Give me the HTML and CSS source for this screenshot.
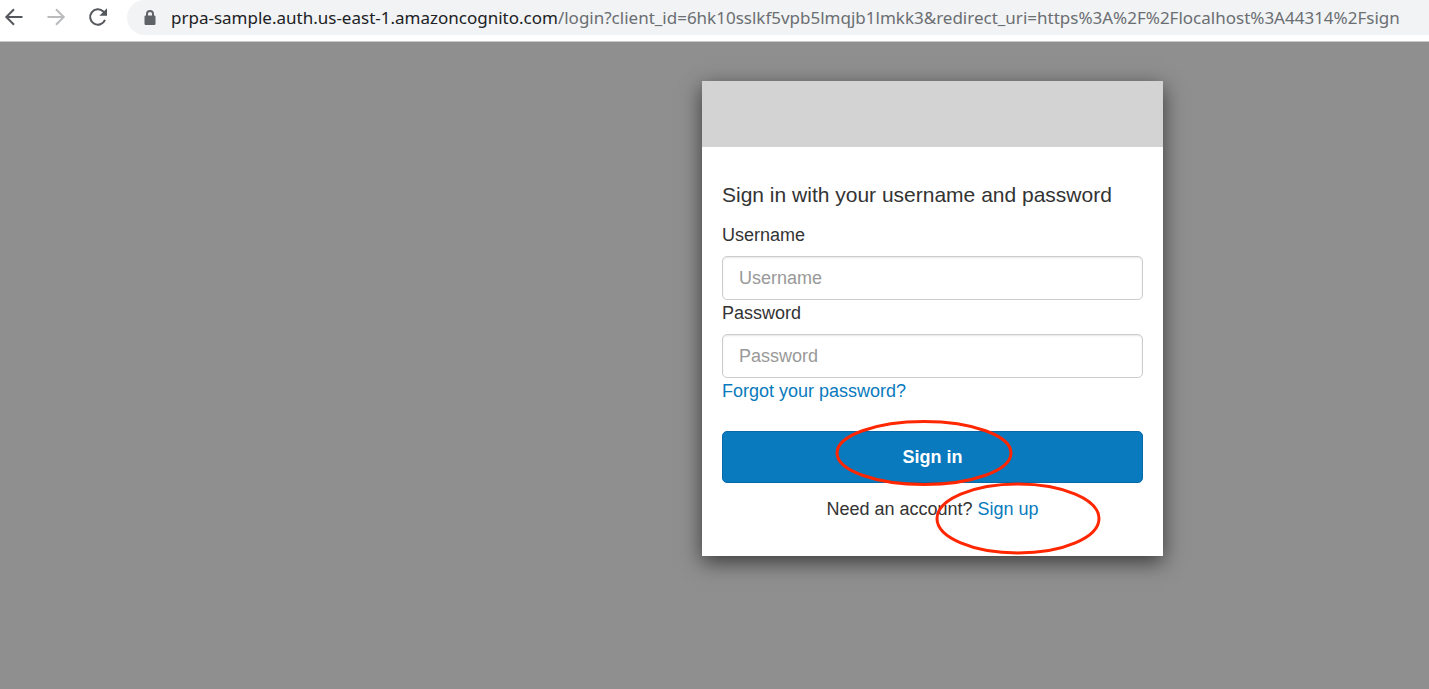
FILE: index.html
```html
<!DOCTYPE html>
<html lang="en">
<head>
<meta charset="utf-8">
<title>Sign in</title>
<link rel="stylesheet" href="styles.css">
</head>
<body>
<header class="toolbar">
  <nav class="nav-buttons" aria-label="Browser navigation">
    <button class="nav-button" type="button" aria-label="Back">
      <svg width="20" height="20" viewBox="0 0 20 20"><path d="M18.500 10H2.500M10 2.300L2.300 10L10 17.700"/></svg>
    </button>
    <button class="nav-button nav-button-disabled" type="button" aria-label="Forward" disabled>
      <svg width="20" height="20" viewBox="0 0 20 20"><path d="M1.500 10H17.500M10 2.300L17.700 10L10 17.700"/></svg>
    </button>
    <button class="nav-button" type="button" aria-label="Reload">
      <svg width="20" height="20" viewBox="0 0 20 20"><path d="M17 12.800A7.700 7.700 0 1 1 15.300 4.500L17 6.200"/><path class="solid" d="M19 1.200V8.800H11.400Z"/></svg>
    </button>
  </nav>
  <div class="address">
    <svg class="lock" width="12" height="16" viewBox="0 0 12 16" aria-hidden="true"><rect x="0.500" y="5.500" width="11" height="9.500" rx="1.300"/><path d="M3 6V4a3 3 0 0 1 6 0V6"/></svg>
    <div class="url"><span class="host">prpa-sample.auth.us-east-1.amazoncognito.com</span>/login?client_id=6hk10sslkf5vpb5lmqjb1lmkk3&amp;redirect_uri=https%3A%2F%2Flocalhost%3A44314%2Fsign</div>
  </div>
</header>
<main class="page">
  <section class="card">
    <div class="banner"></div>
    <form class="form">
      <h1 class="title">Sign in with your username and password</h1>
      <label class="label" for="username">Username</label>
      <input class="field" id="username" type="text" placeholder="Username">
      <label class="label" for="password">Password</label>
      <input class="field" id="password" type="password" placeholder="Password">
      <a class="link" href="#">Forgot your password?</a>
      <button class="submit" type="submit">Sign in</button>
      <p class="signup">Need an account? <a class="link" href="#">Sign up</a></p>
    </form>
    <svg class="marks" width="461" height="475" viewBox="0 0 461 475" aria-hidden="true">
      <ellipse cx="222" cy="372" rx="87" ry="31.500"/>
      <ellipse cx="316" cy="437.500" rx="81" ry="34.500"/>
    </svg>
  </section>
</main>
</body>
</html>
```
FILE: styles.css
```css
* {
  box-sizing: border-box;
}

body {
  margin: 0;
  min-height: 100vh;
  display: flex;
  flex-direction: column;
  overflow-x: hidden;
  background: #8f8f8f;
  color: #333;
  font: 18px/26px "Liberation Sans", Arial, sans-serif;
}

.toolbar {
  display: flex;
  height: 42px;
  padding-bottom: 6px;
  background: #fff;
  border-bottom: 1px solid #c8c9cb;
}

.nav-buttons {
  display: flex;
  align-items: center;
  gap: 22px;
  padding: 0 19px 2px 4px;
}

.nav-button {
  display: flex;
  padding: 0;
  border: 0;
  background: none;
  color: #54585d;
}

.nav-button-disabled {
  color: #b9bbbd;
}

.nav-button path {
  fill: none;
  stroke: currentColor;
  stroke-width: 2;
}

.nav-button .solid {
  fill: currentColor;
  stroke: none;
}

.address {
  flex: 1;
  min-width: 0;
  display: flex;
  align-items: center;
  gap: 15px;
  padding-left: 17px;
  overflow: hidden;
  background: #f1f3f4;
  border-radius: 18px 0 0 18px;
}

.lock {
  flex: none;
  fill: #5f6368;
}

.lock path {
  fill: none;
  stroke: #5f6368;
  stroke-width: 2;
}

.url {
  white-space: nowrap;
  color: #6b6e72;
  font-family: "Noto Sans", "Open Sans", sans-serif;
  font-size: 17px;
}

.host {
  color: #202124;
}

.page {
  flex: 1;
  display: grid;
  grid-template-columns: 702fr 461px 266fr;
  align-items: start;
  padding: 39px 0;
}

.card {
  grid-column: 2;
  position: relative;
  background: #fff;
  box-shadow: 0 6px 20px rgba(0, 0, 0, 0.6);
}

.banner {
  height: 66px;
  background: #d3d3d3;
}

.form {
  display: flex;
  flex-direction: column;
  align-items: stretch;
  padding: 32px 20px 34px;
}

.title {
  margin: 0 0 11px;
  font-size: 21px;
  font-weight: 400;
  line-height: 32px;
}

.label {
  margin-bottom: 8px;
}

.field {
  height: 44px;
  padding: 0 16px;
  border: 1px solid #ccc;
  border-radius: 5px;
  box-shadow: inset 0 1px 2px rgba(0, 0, 0, 0.1);
  color: #555;
  font: inherit;
}

.field::placeholder {
  color: #999;
  opacity: 1;
}

.link {
  color: #087abd;
  text-decoration: none;
}

.submit {
  height: 52px;
  margin: 27px 0 13px;
  border: 1px solid #0769a8;
  border-radius: 5px;
  background: #087abd;
  color: #fff;
  font: inherit;
  font-weight: 700;
}

.signup {
  margin: 0;
  text-align: center;
}

.marks {
  position: absolute;
  top: 0;
  left: 0;
  pointer-events: none;
}

.marks ellipse {
  fill: none;
  stroke: #ff2600;
  stroke-width: 3;
}
```
